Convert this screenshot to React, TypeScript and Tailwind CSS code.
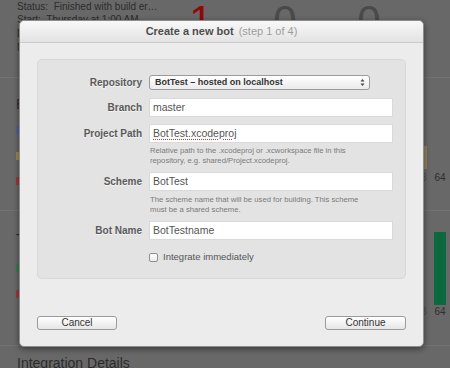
import React from 'react';

const Field = ({ label, value, spell }: { label: string; value: string; spell?: boolean }) => (
  <div className="grid grid-cols-[104px_1fr] gap-x-[7px] items-center">
    <div className="text-right text-[10px] font-bold text-[#5a5a5a] [text-shadow:0_1px_0_#f4f4f4]">{label}</div>
    <div className="h-[19px] bg-white border border-[#d9d9d9] px-[3px] flex items-center text-[10.5px] text-[#555]">
      {spell ? (
        <span className="underline decoration-dotted decoration-[#e03030] underline-offset-2">{value}</span>
      ) : (
        value
      )}
    </div>
  </div>
);

const Help = ({ children }: { children: React.ReactNode }) => (
  <div className="grid grid-cols-[104px_1fr] gap-x-[7px]">
    <div />
    <div className="text-[7.7px] leading-[10px] text-[#7a7a7a] pl-[1px]">{children}</div>
  </div>
);

export default function App() {
  return (
    <div className="relative w-[450px] h-[368px] overflow-hidden bg-[#686868] font-['Liberation_Sans',Arial,sans-serif]">
      {/* page behind the sheet */}
      <div className="flex flex-col text-[#2c2c2c]">
        <div className="flex h-[78px] border-b border-[#727272]">
          <div className="pl-[17px] text-[10px] leading-[13px] w-[189px]">
            <div>Status:&nbsp; Finished with build er…</div>
            <div>Start:&nbsp; Thursday at 1:00 AM</div>
            <div className="mt-[1px]">Duration:&nbsp; 4 minutes</div>
            <div className="mt-[1px]">Number:&nbsp; 12</div>
          </div>
          <div className="flex items-start gap-[60px] text-[42px] leading-none">
            <div className="w-[24px] text-center text-[#8e0a0a]">1</div>
            <div className="w-[24px] text-center text-[#4a4a4a]">0</div>
            <div className="w-[24px] text-center text-[#4a4a4a]">0</div>
          </div>
        </div>

        <div className="flex h-[133px] border-b border-[#727272]">
          <div className="pl-[16px] pt-[18px]">
            <div className="text-[14px] leading-[17px]">Build Results</div>
            <div className="mt-[10px] flex flex-col gap-[10px] text-[10px]">
              <div className="flex items-center gap-[6px]"><span className="w-[6px] h-[8px] bg-[#565f98]" />Warnings</div>
              <div className="flex items-center gap-[6px]"><span className="w-[6px] h-[8px] bg-[#9a8a4e]" />Analysis</div>
              <div className="flex items-center gap-[6px]"><span className="w-[6px] h-[8px] bg-[#9a3b3b]" />Errors</div>
            </div>
          </div>
          <div className="ml-auto flex gap-[7px] pr-[4px] items-end pb-[26px]">
            <div className="w-[12px] flex flex-col items-center">
              <div className="w-[12px] h-[23px] bg-[#8f8158]" />
              <div className="text-[10px] leading-[12px] mt-[3px] text-[#4d4d4d]">48</div>
            </div>
            <div className="w-[12px] flex flex-col items-center">
              <div className="text-[10px] leading-[12px] mt-[3px] text-[#2e2e2e]">64</div>
            </div>
          </div>
        </div>

        <div className="flex h-[135px] border-b border-[#727272]">
          <div className="pl-[16px] pt-[20px]">
            <div className="text-[14px] leading-[17px]">Tests</div>
            <div className="mt-[12px] flex flex-col gap-[11px] text-[10px]">
              <div className="flex items-center gap-[6px]"><span className="w-[6px] h-[8px] bg-[#3d7a4b]" />Passed</div>
              <div className="flex items-center gap-[6px]"><span className="w-[6px] h-[8px] bg-[#9a3b3b]" />Failed</div>
            </div>
          </div>
          <div className="ml-auto flex gap-[7px] pr-[4px] items-end pb-[27px]">
            <div className="w-[12px] flex flex-col items-center">
              <div className="text-[10px] leading-[12px] mt-[1px] text-[#4d4d4d]">48</div>
            </div>
            <div className="w-[12px] flex flex-col items-center">
              <div className="w-[12px] h-[73px] bg-[#0d6a3e]" />
              <div className="text-[10px] leading-[12px] mt-[1px] text-[#2e2e2e]">64</div>
            </div>
          </div>
        </div>

        <div className="pl-[17px] pt-[9px] text-[14px] leading-[17px]">Integration Details</div>
      </div>

      {/* sheet */}
      <div className="absolute left-[19px] top-[20px] w-[405px] h-[327px] bg-[#ececec] rounded-[5px] border border-[#8c8c8c] shadow-[0_2px_6px_rgba(0,0,0,0.45)] flex flex-col">
        <div className="h-[22px] shrink-0 rounded-t-[5px] bg-gradient-to-b from-[#f8f8f8] to-[#e3e3e3] border-b border-[#cacaca] flex items-center justify-center text-[11px]">
          <span className="font-bold text-[#4d4d4d]">Create a new bot</span>
          <span className="ml-[5px] text-[#9d9d9d]">(step 1 of 4)</span>
        </div>

        <div className="px-[17px] pt-[16px]">
          <div className="h-[220px] bg-[#e3e3e3] border border-[#d7d7d7] rounded-[5px] pt-[15px] pr-[12px] flex flex-col">
            <div className="grid grid-cols-[104px_1fr] gap-x-[7px] items-center">
              <div className="text-right text-[10px] font-bold text-[#5a5a5a] [text-shadow:0_1px_0_#f4f4f4]">Repository</div>
              <div className="w-[221px] h-[15px] rounded-[3px] border border-[#9b9b9b] bg-gradient-to-b from-white to-[#ebebeb] flex items-center justify-between pl-[5px] pr-[4px] text-[9px] font-bold text-[#333]">
                <span>BotTest – hosted on localhost</span>
                <svg width="5" height="9" viewBox="0 0 5 9">
                  <path d="M0.5 3.5 L2.5 1 L4.5 3.5 Z" fill="#444" />
                  <path d="M0.5 5.5 L2.5 8 L4.5 5.5 Z" fill="#444" />
                </svg>
              </div>
            </div>
            <div className="mt-[8px]">
              <Field label="Branch" value="master" />
            </div>
            <div className="mt-[7px]">
              <Field label="Project Path" value="BotTest.xcodeproj" spell />
            </div>
            <div className="mt-[3px]">
              <Help>
                Relative path to the .xcodeproj or .xcworkspace file in this<br />
                repository, e.g. shared/Project.xcodeproj.
              </Help>
            </div>
            <div className="mt-[6px]">
              <Field label="Scheme" value="BotTest" />
            </div>
            <div className="mt-[4px]">
              <Help>
                The scheme name that will be used for building. This scheme<br />
                must be a shared scheme.
              </Help>
            </div>
            <div className="mt-[6px]">
              <Field label="Bot Name" value="BotTestname" />
            </div>
            <div className="mt-[10px] grid grid-cols-[104px_1fr] gap-x-[7px] items-center">
              <div />
              <label className="flex items-center gap-[5px] text-[9.5px] text-[#555]">
                <span className="w-[9px] h-[9px] rounded-[2px] border border-[#8e8e8e] bg-gradient-to-b from-white to-[#ececec]" />
                Integrate immediately
              </label>
            </div>
          </div>

          <div className="mt-[37px] flex justify-between">
            <button className="w-[80px] h-[14px] rounded-[3px] border border-[#9b9b9b] bg-gradient-to-b from-white to-[#e6e6e6] text-[10px] leading-none text-[#333]">
              Cancel
            </button>
            <button className="w-[81px] h-[14px] rounded-[3px] border border-[#9b9b9b] bg-gradient-to-b from-white to-[#e6e6e6] text-[10px] leading-none text-[#333]">
              Continue
            </button>
          </div>
        </div>
      </div>
    </div>
  );
}
